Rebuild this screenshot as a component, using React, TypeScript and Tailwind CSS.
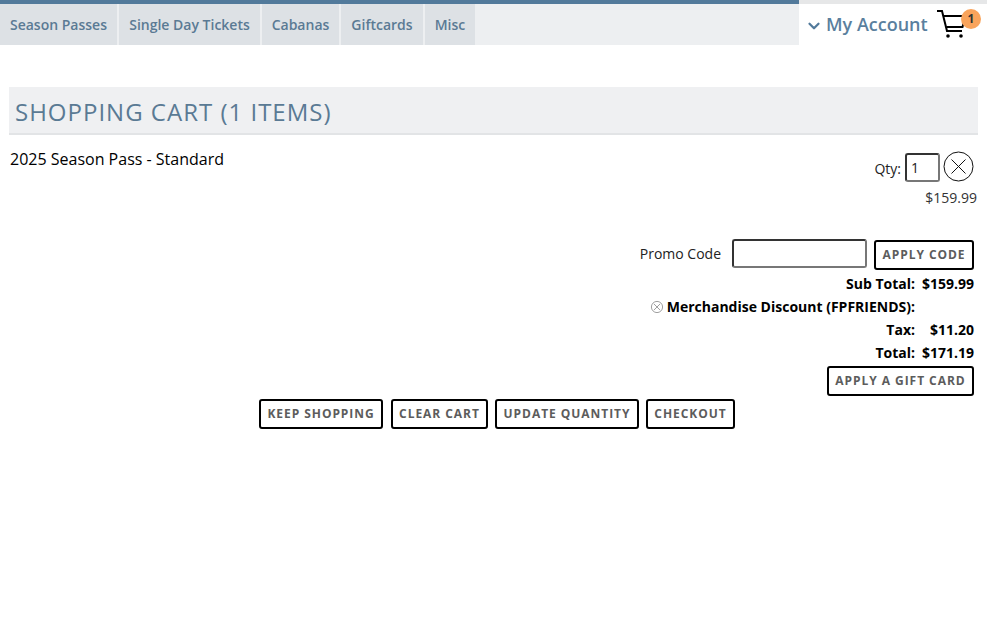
import { ChevronDown } from "lucide-react";

const NAV = [
  { label: "Season Passes", w: "w-[117px]" },
  { label: "Single Day Tickets", w: "w-[141px]" },
  { label: "Cabanas", w: "w-[77px]" },
  { label: "Giftcards", w: "w-[82px]" },
  { label: "Misc", w: "w-[50px]" },
];

function Btn({ children, className = "" }: { children: string; className?: string }) {
  return (
    <button className={`h-[30px] border-2 border-black rounded-[3px] bg-white text-[12px] font-bold tracking-[0.95px] text-[#5c5c5c] whitespace-nowrap ${className}`}>
      {children}
    </button>
  );
}

function Row({ label, value, icon }: { label: string; value?: string; icon?: boolean }) {
  return (
    <div className="flex justify-end items-center h-[23px] font-bold text-[14px] text-black pr-[13px]">
      {icon && (
        <svg width="14" height="14" viewBox="0 0 14 14" fill="none" stroke="#888" strokeWidth="0.8" className="mr-[3px]">
          <circle cx="7" cy="7" r="5.6" />
          <path d="M4 4l6 6M10 4l-6 6" />
        </svg>
      )}
      <span>{label}</span>
      <span className="w-[59px] text-right">{value}</span>
    </div>
  );
}

export default function App() {
  return (
    <div className="w-[987px] h-[617px] bg-white overflow-hidden font-['Open_Sans',sans-serif]">
      {/* Top nav */}
      <div className="h-[4px] flex bg-[#e6e7e8]">
        <div className="w-[799px] bg-[#527a9b]" />
      </div>
      <div className="h-[41px] flex">
        <div className="w-[799px] bg-[#edeff1] flex gap-[2px]">
          {NAV.map((n) => (
            <div key={n.label} className={`${n.w} bg-[#dde1e5] flex items-center justify-center text-[14px] font-semibold text-[#5a7a94] whitespace-nowrap`}>
              {n.label}
            </div>
          ))}
        </div>
        <div className="flex-1 flex items-center relative pl-[8px]">
          <ChevronDown className="w-[18px] h-[18px] text-[#527a9b] -ml-[2px] mt-[2px]" strokeWidth={3} />
          <span className="ml-[3px] text-[18px] font-semibold text-[#5a7f9e] whitespace-nowrap">My Account</span>
          <svg width="30" height="30" viewBox="0 0 30 30" fill="none" stroke="black" strokeWidth="2" className="ml-[9px] mt-[-1px]">
            <path d="M0 2h5l5 20h15" />
            <path d="M6.5 7h22l-3 11H9.5" />
            <circle cx="11" cy="27" r="1.8" fill="black" stroke="none" />
            <circle cx="24" cy="27" r="1.8" fill="black" stroke="none" />
          </svg>
          <span className="absolute left-[162px] top-[5px] w-[20px] h-[20px] rounded-full bg-[#f9a45c] flex items-center justify-center text-[12px] font-bold text-[#333]">1</span>
        </div>
      </div>

      {/* Heading */}
      <div className="mx-[9px] w-[969px] mt-[42px] h-[48px] bg-[#eff0f2] border-b-2 border-[#e2e4e6] pl-[6px] pt-[4px] flex items-center">
        <h1 className="text-[24px] tracking-[1px] text-[#5a7a94] whitespace-nowrap">SHOPPING CART (1 ITEMS)</h1>
      </div>

      {/* Cart item */}
      <div className="flex justify-between pl-[10px] pr-[10px] mt-[12px]">
        <div className="text-[16px] text-black leading-[24px]">2025 Season Pass - Standard</div>
        <div className="flex flex-col items-end">
          <div className="flex items-center h-[32px] mt-[3px] mr-[3px]">
            <span className="text-[14px] text-[#222] mr-[4px] mt-[4px]">Qty:</span>
            <div className="w-[35px] h-[29px] mt-[2px] border-2 border-[#333] border-r-[#777] border-b-[#777] rounded-[3px] text-[14px] text-[#222] pl-[4px] flex items-center">1</div>
            <svg width="31" height="31" viewBox="0 0 31 31" fill="none" stroke="#111" strokeWidth="1" className="ml-[3px]">
              <circle cx="15.5" cy="15.5" r="14.5" />
              <path d="M8.5 8.5l14 14M22.5 8.5l-14 14" />
            </svg>
          </div>
          <div className="text-[14px] text-[#333] mt-[6px] leading-[19px]">$159.99</div>
        </div>
      </div>

      {/* Promo */}
      <div className="flex justify-end items-center mt-[31px] pr-[13px] h-[31px]">
        <span className="text-[14px] text-[#222] mr-[11px]">Promo Code</span>
        <div className="w-[135px] h-[29px] border-2 border-[#333] border-r-[#777] border-b-[#777] rounded-[3px] mr-[7px]" />
        <Btn className="w-[100px] mt-[2px]">APPLY CODE</Btn>
      </div>

      {/* Totals */}
      <div className="mt-[3px]">
        <Row label="Sub Total:" value="$159.99" />
        <Row label="Merchandise Discount (FPFRIENDS):" icon />
        <Row label="Tax:" value="$11.20" />
        <Row label="Total:" value="$171.19" />
      </div>
      <div className="flex justify-end pr-[13px] mt-[2px]">
        <Btn className="w-[147px]">APPLY A GIFT CARD</Btn>
      </div>

      {/* Actions */}
      <div className="flex mt-[3px] ml-[259px] gap-[7px]">
        <Btn className="w-[124px] mr-[1px]">KEEP SHOPPING</Btn>
        <Btn className="w-[97px]">CLEAR CART</Btn>
        <Btn className="w-[144px]">UPDATE QUANTITY</Btn>
        <Btn className="w-[89px]">CHECKOUT</Btn>
      </div>
    </div>
  );
}
